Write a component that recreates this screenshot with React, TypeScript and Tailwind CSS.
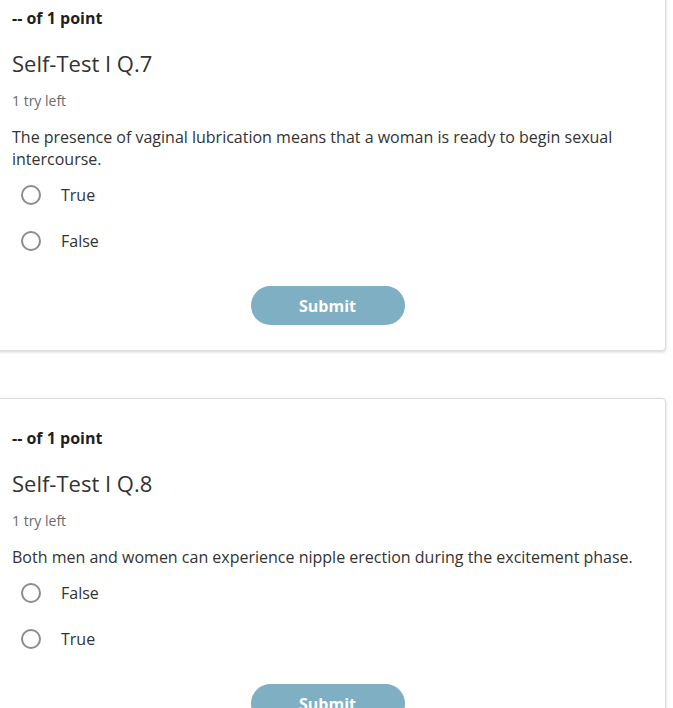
import React from "react";

function Radio({ label }: { label: string }) {
  return (
    <div className="flex items-center h-[24px]">
      <span className="ml-[21px] w-[20px] h-[20px] rounded-full border-2 border-[#8c8c8c] bg-white shrink-0" />
      <span className="ml-[20px] text-[16px] leading-[24px] text-[#333333]">{label}</span>
    </div>
  );
}

function Card({
  title,
  question,
  options,
}: {
  title: string;
  question: string;
  options: string[];
}) {
  return (
    <div className="bg-white border border-[#dddddd] rounded-[4px] shadow-[0_1px_3px_rgba(0,0,0,0.18)] pt-[27px] pb-[25px]">
      <div className="pl-[22px] pr-[10px]">
        <div className="text-[16px] leading-[24px] font-bold text-[#1f1f1f]">-- of 1 point</div>
        <div className="mt-[18px] text-[22px] leading-[30px] text-[#333333]">{title}</div>
        <div className="mt-[13px] text-[14px] leading-[20px] text-[#6b6b6b]">1 try left</div>
        <div className="mt-[15px] text-[16px] leading-[22px] text-[#333333]">{question}</div>
      </div>
      <div className="pl-[10px] mt-[13px] flex flex-col gap-[22px]">
        {options.map((o) => (
          <Radio key={o} label={o} />
        ))}
      </div>
      <div className="mt-[33px] flex justify-center">
        <button className="w-[154px] h-[39px] rounded-full bg-[#7fafc2] text-white text-[16px] font-bold">
          Submit
        </button>
      </div>
    </div>
  );
}

export default function App() {
  return (
    <div className="bg-white w-[673px] h-[708px] overflow-hidden font-['Open_Sans',sans-serif]">
      <div className="-mt-[22px] -ml-[11px] mr-[7px] flex flex-col gap-[47px]">
        <Card
          title="Self-Test I Q.7"
          question="The presence of vaginal lubrication means that a woman is ready to begin sexual intercourse."
          options={["True", "False"]}
        />
        <Card
          title="Self-Test I Q.8"
          question="Both men and women can experience nipple erection during the excitement phase."
          options={["False", "True"]}
        />
      </div>
    </div>
  );
}
